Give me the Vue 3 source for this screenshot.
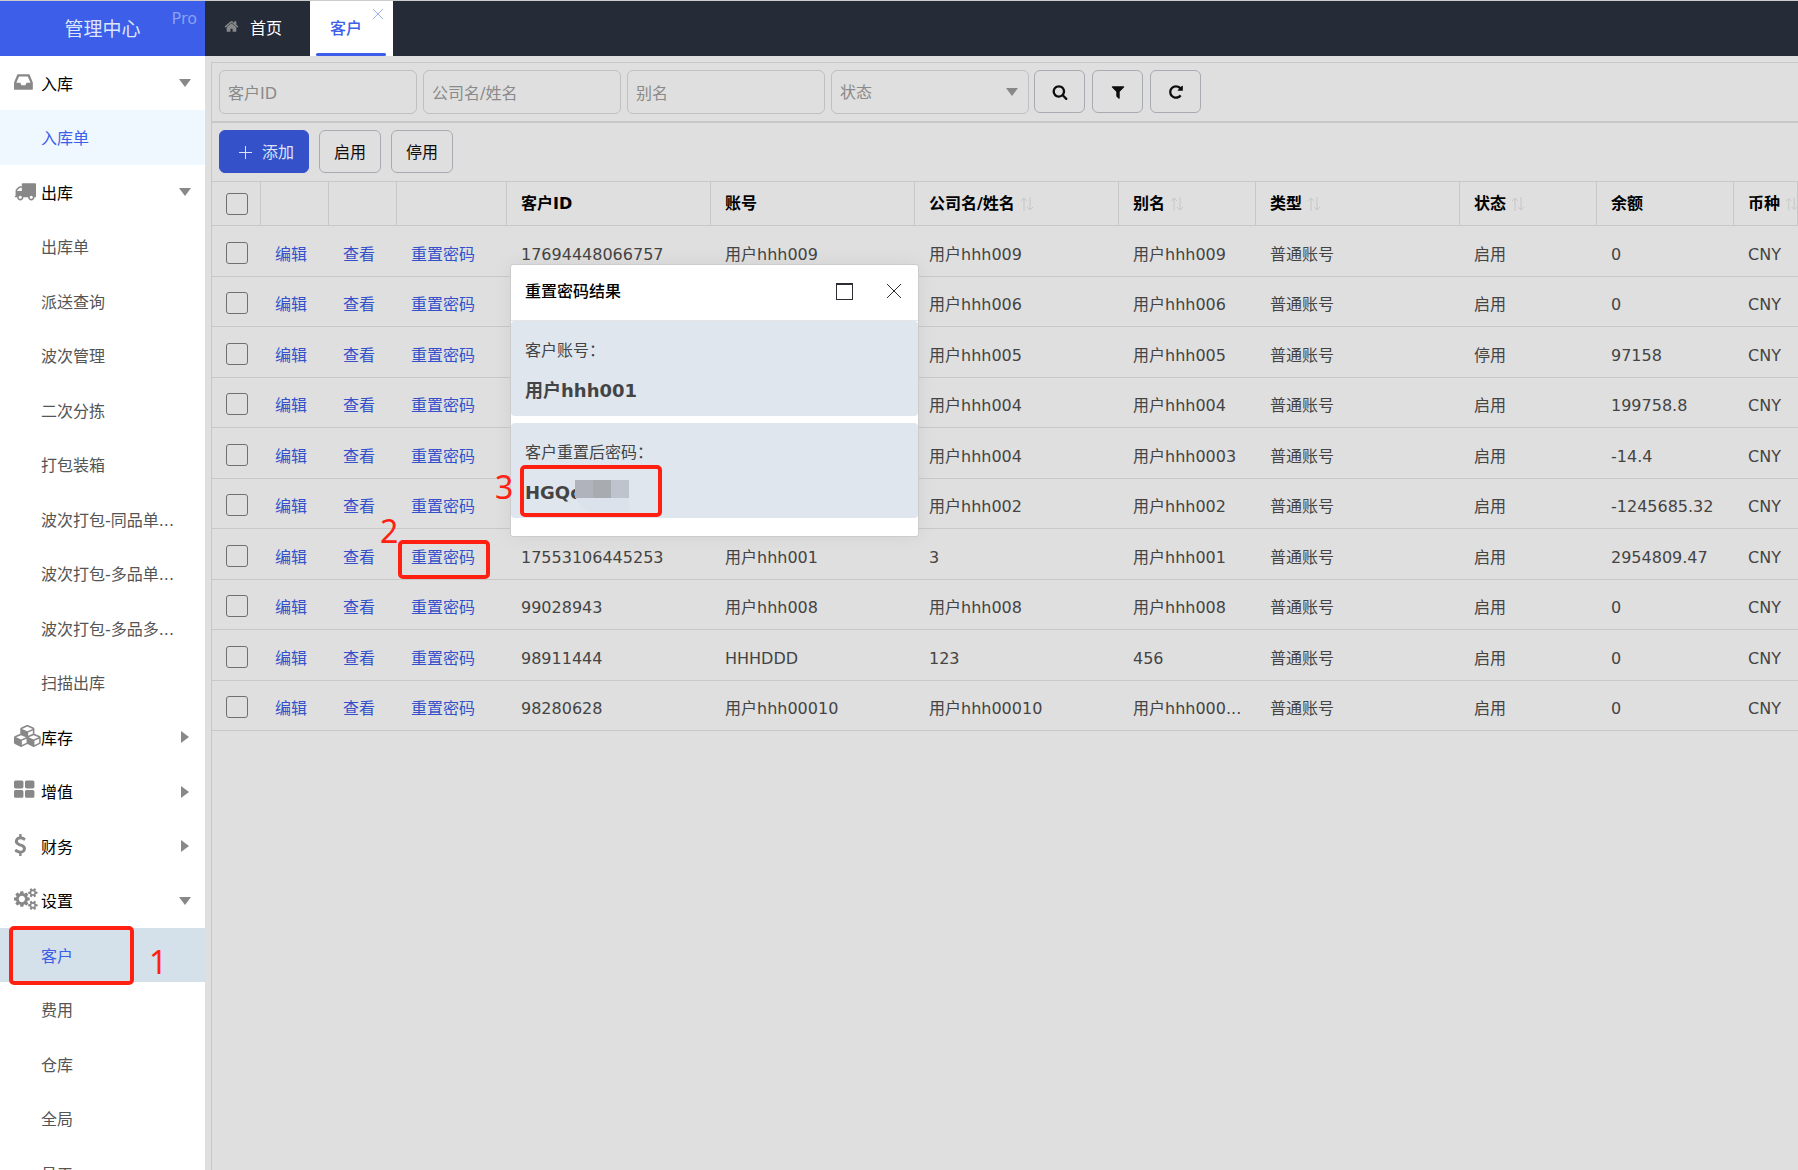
<script setup>
import { ref } from 'vue'

const icons = {
  inbox: {
    box: '128 0 1536 1792',
    d: 'M1151 960h316q-1-3-2.5-8.5t-2.5-7.5l-212-496h-708l-212 496q-1 3-2.5 8.5t-2.5 7.5h316l95 192h320zm513 30v482q0 26-19 45t-45 19h-1408q-26 0-45-19t-19-45v-482q0-62 25-123l238-552q10-25 36.5-42t52.5-17h832q26 0 52.5 17t36.5 42l238 552q25 61 25 123z'
  },
  truck: {
    box: '0 0 1792 1792',
    d: 'M640 1408q0-52-38-90t-90-38-90 38-38 90 38 90 90 38 90-38 38-90zm-384-512h384v-256h-158q-13 0-22 9l-195 195q-9 9-9 22v30zm1280 512q0-52-38-90t-90-38-90 38-38 90 38 90 90 38 90-38 38-90zm256-1088v1024q0 15-4 26.5t-13.5 18.5-16.5 11.5-23.5 6-22.5 2-25.5 0-22.5-.5q0 106-75 181t-181 75-181-75-75-181h-384q0 106-75 181t-181 75-181-75-75-181h-64q-3 0-22.5.5t-25.5 0-22.5-2-23.5-6-16.5-11.5-13.5-18.5-4-26.5q0-26 19-45t45-19v-320q0-8-.5-35t0-38 2.5-34.5 6.5-37 14-30.5 22.5-30l198-198q19-19 50.5-32t58.5-13h160v-192q0-26 19-45t45-19h1024q26 0 45 19t19 45z'
  },
  cubes: {
    box: '0 0 2304 1792',
    d: 'M640 1632l384-192v-314l-384 164v342zm-64-454l404-173-404-173-404 173zm1088 454l384-192v-314l-384 164v342zm-64-454l404-173-404-173-404 173zm-448-293l384-165v-266l-384 164v267zm-64-379l441-189-441-189-441 189zm1088 518v416q0 36-19 67t-52 47l-448 224q-25 14-57 14t-57-14l-448-224q-4-2-7-4-2 2-7 4l-448 224q-25 14-57 14t-57-14l-448-224q-33-16-52-47t-19-67v-416q0-38 21.5-70t56.5-48l434-186v-400q0-38 21.5-70t56.5-48l448-192q23-10 50-10t50 10l448 192q35 16 56.5 48t21.5 70v400l434 186q36 16 57 48t21 70z'
  },
  grid: {
    box: '64 0 1664 1792',
    d: 'M832 1024v384q0 52-38 90t-90 38h-512q-52 0-90-38t-38-90v-384q0-52 38-90t90-38h512q52 0 90 38t38 90zm0-768v384q0 52-38 90t-90 38h-512q-52 0-90-38t-38-90v-384q0-52 38-90t90-38h512q52 0 90 38t38 90zm896 768v384q0 52-38 90t-90 38h-512q-52 0-90-38t-38-90v-384q0-52 38-90t90-38h512q52 0 90 38t38 90zm0-768v384q0 52-38 90t-90 38h-512q-52 0-90-38t-38-90v-384q0-52 38-90t90-38h512q52 0 90 38t38 90z'
  },
  dollar: {
    box: '384 0 1024 1792',
    d: 'M1362 1185q0 153-99.5 263.5t-258.5 136.5v175q0 14-9 23t-23 9h-135q-13 0-22.5-9.5t-9.5-22.5v-175q-66-9-127.5-31t-101.5-44.5-74-48-46.5-37.5-17.5-18q-17-21-2-41l103-135q7-10 23-12 15-2 24 9l2 2q113 99 243 125 37 8 74 8 81 0 142.5-43t61.5-122q0-28-15-53t-33.5-42-58.5-37.5-66-32-80-32.5q-39-16-61.5-25t-61.5-26.5-62.5-31-56.5-35.5-53.5-42.5-43.5-49-35.5-58-21-66.5-8.5-78q0-138 98-242t255-134v-180q0-13 9.5-22.5t22.5-9.5h135q14 0 23 9t9 23v176q57 6 110.5 23t87 33.5 63.5 37.5 39 29 15 14q17 18 5 38l-81 146q-8 15-23 16-14 3-27-7-3-3-14.5-12t-39-26.5-58.5-32-74.5-26-85.5-11.5q-95 0-155 43t-60 111q0 26 8.5 48t29.5 41.5 39.5 33 56 31 60.5 27 70 27.5q53 20 81 31.5t76 35 75.5 42.5 62 50 53 63.5 31.5 76.5 13 94z'
  },
  cogs: {
    box: '0 0 1920 1792',
    d: 'M896 896q0-106-75-181t-181-75-181 75-75 181 75 181 181 75 181-75 75-181zm768 512q0-52-38-90t-90-38-90 38-38 90q0 53 37.5 90.5t90.5 37.5 90.5-37.5 37.5-90.5zm0-1024q0-52-38-90t-90-38-90 38-38 90q0 53 37.5 90.5t90.5 37.5 90.5-37.5 37.5-90.5zm-384 421v185q0 10-7 19.5t-16 10.5l-155 24q-11 35-32 76 34 48 90 115 7 11 7 20 0 12-7 19-23 30-82.5 89.5t-78.5 59.5q-11 0-21-7l-115-90q-37 19-77 31-11 108-23 155-7 24-30 24h-186q-11 0-20-7.5t-10-17.5l-23-153q-34-10-75-31l-118 89q-7 7-20 7-11 0-21-8-144-133-144-160 0-9 7-19 10-14 41-53t47-61q-23-44-35-82l-152-24q-10-1-17-9.5t-7-19.5v-185q0-10 7-19.5t16-10.5l155-24q11-35 32-76-34-48-90-115-7-11-7-20 0-12 7-20 22-30 82-89t79-59q11 0 21 7l115 90q34-18 77-32 11-108 23-154 7-24 30-24h186q11 0 20 7.5t10 17.5l23 153q34 10 75 31l118-89q8-7 20-7 11 0 21 8 144 133 144 160 0 8-7 19-12 16-42 54t-45 60q23 48 34 82l152 23q10 2 17 10.5t7 19.5zm640 533v140q0 16-149 31-12 27-30 52 51 113 51 138 0 4-4 7-122 71-124 71-8 0-46-47t-52-68q-20 2-30 2t-30-2q-14 21-52 68t-46 47q-2 0-124-71-4-3-4-7 0-25 51-138-18-25-30-52-149-15-149-31v-140q0-16 149-31 13-29 30-52-51-113-51-138 0-4 4-7 4-2 35-20t59-34 30-16q8 0 46 46.5t52 67.5q20-2 30-2t30 2q51-71 92-112l6-2q4 0 124 70 4 3 4 7 0 25-51 138 17 23 30 52 149 15 149 31zm0-1024v140q0 16-149 31-12 27-30 52 51 113 51 138 0 4-4 7-122 71-124 71-8 0-46-47t-52-68q-20 2-30 2t-30-2q-14 21-52 68t-46 47q-2 0-124-71-4-3-4-7 0-25 51-138-18-25-30-52-149-15-149-31v-140q0-16 149-31 13-29 30-52-51-113-51-138 0-4 4-7 4-2 35-20t59-34 30-16q8 0 46 46.5t52 67.5q20-2 30-2t30 2q51-71 92-112l6-2q4 0 124 70 4 3 4 7 0 25-51 138 17 23 30 52 149 15 149 31z'
  }
}

const menu = [
  { title: '入库', icon: 'inbox', open: true },
  { label: '入库单', state: 'current' },
  { title: '出库', icon: 'truck', open: true },
  { label: '出库单' },
  { label: '派送查询' },
  { label: '波次管理' },
  { label: '二次分拣' },
  { label: '打包装箱' },
  { label: '波次打包-同品单...' },
  { label: '波次打包-多品单...' },
  { label: '波次打包-多品多...' },
  { label: '扫描出库' },
  { title: '库存', icon: 'cubes' },
  { title: '增值', icon: 'grid' },
  { title: '财务', icon: 'dollar' },
  { title: '设置', icon: 'cogs', open: true },
  { label: '客户', state: 'selected' },
  { label: '费用' },
  { label: '仓库' },
  { label: '全局' },
  { label: '员工' }
]

const columns = [
  { name: '客户ID', cls: 'wide' },
  { name: '账号', cls: 'wide' },
  { name: '公司名/姓名', cls: 'wide', sort: true },
  { name: '别名', cls: 'mid', sort: true },
  { name: '类型', cls: 'wide', sort: true },
  { name: '状态', cls: 'mid', sort: true },
  { name: '余额', cls: 'mid' },
  { name: '币种', cls: 'rest', sort: true }
]

const rows = [
  ['17694448066757', '用户hhh009', '用户hhh009', '用户hhh009', '普通账号', '启用', '0', 'CNY'],
  ['', '', '用户hhh006', '用户hhh006', '普通账号', '启用', '0', 'CNY'],
  ['', '', '用户hhh005', '用户hhh005', '普通账号', '停用', '97158', 'CNY'],
  ['', '', '用户hhh004', '用户hhh004', '普通账号', '启用', '199758.8', 'CNY'],
  ['', '', '用户hhh004', '用户hhh0003', '普通账号', '启用', '-14.4', 'CNY'],
  ['', '', '用户hhh002', '用户hhh002', '普通账号', '启用', '-1245685.32', 'CNY'],
  ['17553106445253', '用户hhh001', '3', '用户hhh001', '普通账号', '启用', '2954809.47', 'CNY'],
  ['99028943', '用户hhh008', '用户hhh008', '用户hhh008', '普通账号', '启用', '0', 'CNY'],
  ['98911444', 'HHHDDD', '123', '456', '普通账号', '启用', '0', 'CNY'],
  ['98280628', '用户hhh00010', '用户hhh00010', '用户hhh000...', '普通账号', '启用', '0', 'CNY']
]

const status = ref('')
</script>

<template>
  <div class="page">
    <aside class="sidebar">
      <div class="brand">管理中心<span class="edition">Pro</span></div>
      <nav>
        <ul class="menu">
          <li v-for="(m, i) in menu" :key="i" :class="m.state">
            <button v-if="m.title" type="button" class="group">
              <span class="slot">
                <svg :viewBox="icons[m.icon].box" aria-hidden="true"><path :d="icons[m.icon].d" /></svg>
              </span>
              {{ m.title }}
              <span class="caret" :class="{ open: m.open }"></span>
            </button>
            <a v-else href="#">{{ m.label }}</a>
          </li>
        </ul>
      </nav>
    </aside>

    <div class="main">
      <header class="tabs">
        <a class="tab" href="#">
          <svg class="home" viewBox="0 0 1792 1792" aria-hidden="true"><path d="M1472 992v480q0 26-19 45t-45 19h-384v-384h-256v384h-384q-26 0-45-19t-19-45v-480q0-1 .5-3t.5-3l575-474 575 474q1 2 1 6zm223-69l-62 74q-8 9-21 11h-3q-13 0-21-7l-692-577-692 577q-12 8-24 7-13-2-21-11l-62-74q-8-10-7-23.5t11-21.5l719-599q32-26 76-26t76 26l244 204v-195q0-14 9-23t23-9h192q14 0 23 9t9 23v408l219 182q10 8 11 21.5t-7 23.5z" /></svg>
          首页
        </a>
        <div class="tab active">
          <a href="#">客户</a>
          <button type="button" class="tab-close" aria-label="关闭标签">
            <svg viewBox="0 0 12 12" aria-hidden="true"><path d="M1 1l10 10M11 1L1 11" /></svg>
          </button>
        </div>
      </header>

      <main class="content">
        <section class="panel">
          <form class="filters" @submit.prevent>
            <div class="fields">
              <input type="text" placeholder="客户ID" aria-label="客户ID" />
              <input type="text" placeholder="公司名/姓名" aria-label="公司名/姓名" />
              <input type="text" placeholder="别名" aria-label="别名" />
              <span class="select">
                <select v-model="status" aria-label="状态">
                  <option value="">状态</option>
                  <option>启用</option>
                  <option>停用</option>
                </select>
                <span class="caret open"></span>
              </span>
            </div>
            <div class="actions">
              <button type="submit" class="btn icon" aria-label="搜索">
                <svg viewBox="0 0 1792 1792" aria-hidden="true"><path d="M1216 832q0-185-131.5-316.5t-316.5-131.5-316.5 131.5-131.5 316.5 131.5 316.5 316.5 131.5 316.5-131.5 131.5-316.5zm512 832q0 52-38 90t-90 38q-54 0-90-38l-343-342q-179 124-399 124-143 0-273.5-55.5t-225-150-150-225-55.5-273.5 55.5-273.5 150-225 225-150 273.5-55.5 273.5 55.5 225 150 150 225 55.5 273.5q0 220-124 399l343 343q37 37 37 90z" /></svg>
              </button>
              <button type="button" class="btn icon" aria-label="筛选">
                <svg viewBox="0 0 1792 1792" aria-hidden="true"><path d="M1595 295q17 41-14 70l-493 493v742q0 42-39 59-13 5-25 5-27 0-45-19l-256-256q-19-19-19-45v-486l-493-493q-31-29-14-70 17-39 59-39h1280q42 0 59 39z" /></svg>
              </button>
              <button type="button" class="btn icon" aria-label="刷新">
                <svg viewBox="0 0 1792 1792" aria-hidden="true"><path d="M1664 256v448q0 26-19 45t-45 19h-448q-42 0-59-40-17-39 14-69l138-138q-148-137-349-137-104 0-198.5 40.5t-163.5 109.5-109.5 163.5-40.5 198.5 40.5 198.5 109.5 163.5 163.5 109.5 198.5 40.5q119 0 225-52t179-147q7-10 23-12 15 0 25 9l137 138q9 8 9.5 20.5t-7.5 22.5q-109 132-264 204.5t-327 72.5q-156 0-298-61t-245-164-164-245-61-298 61-298 164-245 245-164 298-61q147 0 284.5 55.5t244.5 156.5l130-129q29-31 70-14 39 17 39 59z" /></svg>
              </button>
            </div>
          </form>

          <div class="toolbar">
            <button type="button" class="btn primary">
              <svg viewBox="0 0 13 13" aria-hidden="true"><path d="M6.5 0v13M0 6.5h13" /></svg>
              添加
            </button>
            <button type="button" class="btn">启用</button>
            <button type="button" class="btn">停用</button>
          </div>

          <table>
            <colgroup>
              <col class="check" /><col class="op" /><col class="op" /><col class="reset" />
              <col v-for="c in columns" :key="c.name" :class="c.cls" />
            </colgroup>
            <thead>
              <tr>
                <th><input type="checkbox" aria-label="全选" /></th>
                <th></th>
                <th></th>
                <th></th>
                <th v-for="c in columns" :key="c.name" scope="col">
                  <span class="head">
                    {{ c.name }}
                    <svg v-if="c.sort" viewBox="0 0 12 14" aria-hidden="true"><path d="M3 14V2M0 4l3-3 3 3M9 0v12M6 10l3 3 3-3" /></svg>
                  </span>
                </th>
              </tr>
            </thead>
            <tbody>
              <tr v-for="(r, n) in rows" :key="n">
                <td><input type="checkbox" :aria-label="'选择 ' + r[3]" /></td>
                <td><a href="#">编辑</a></td>
                <td><a href="#">查看</a></td>
                <td><a href="#">重置密码</a></td>
                <td v-for="(v, i) in r" :key="i">{{ v }}</td>
              </tr>
            </tbody>
          </table>
        </section>
      </main>
    </div>

    <div class="dialog" role="dialog" aria-labelledby="dialog-title">
      <div class="dialog-head">
        <h2 id="dialog-title">重置密码结果</h2>
        <button type="button" aria-label="最大化"><span class="maximize"></span></button>
        <button type="button" aria-label="关闭">
          <svg viewBox="0 0 14 14" aria-hidden="true"><path d="M0 0l14 14M14 0L0 14" /></svg>
        </button>
      </div>
      <div class="result">
        <p>客户账号：</p>
        <strong>用户hhh001</strong>
      </div>
      <div class="result">
        <p>客户重置后密码：</p>
        <strong>HGQc<span class="mask"><i></i><i></i><i></i></span></strong>
      </div>
    </div>

    <div class="mark mark-1"></div>
    <div class="mark mark-2"></div>
    <div class="mark mark-3"></div>
    <span class="step step-1">1</span>
    <span class="step step-2">2</span>
    <span class="step step-3">3</span>
  </div>
</template>

<style>
body {
  background: #dfdfdf;
}
</style>

<style scoped>
* {
  box-sizing: border-box;
}

.page {
  position: relative;
  display: flex;
  height: 100vh;
  overflow: hidden;
  border-top: 1px solid #ccc;
  font: 16px/24px "DejaVu Sans", "Noto Sans CJK SC", sans-serif;
  color: #444;
  background: #dfdfdf;
}

a {
  color: inherit;
  text-decoration: none;
}

button,
input,
select {
  margin: 0;
  font: inherit;
  color: inherit;
}

svg {
  display: block;
  fill: currentColor;
}

/* Sidebar */
.sidebar {
  flex: 0 0 205px;
  overflow: hidden;
  background: #fff;
}

.brand {
  position: relative;
  height: 55px;
  padding-top: 1px;
  font-size: 19px;
  line-height: 55px;
  text-align: center;
  color: #dfe5fc;
  background: #3c5ee8;
}

.edition {
  position: absolute;
  top: 6px;
  right: 8px;
  font-size: 16px;
  line-height: 24px;
  color: #8b9ff2;
}

.menu {
  margin: 0;
  padding: 0;
  list-style: none;
}

.menu li {
  height: 54px;
  color: #555;
}

.menu li:nth-child(even) {
  height: 55px;
}

.menu li.current {
  color: #3c5ee8;
  background: #eff7ff;
}

.menu li.selected {
  color: #3c5ee8;
  background: #d5e1ea;
}

.menu a,
.group {
  display: flex;
  align-items: center;
  width: 100%;
  height: 100%;
  padding: 3px 14px 0 41px;
  white-space: nowrap;
}

.group {
  border: 0;
  padding-left: 14px;
  color: #000;
  background: none;
}

.slot {
  width: 27px;
  padding-bottom: 6px;
  color: #888;
}

.slot svg {
  height: 22px;
  overflow: visible;
}

.caret {
  margin-right: 2px;
  margin-bottom: 3px;
  margin-left: auto;
  border: solid transparent;
  border-width: 6px 0 6px 8px;
  border-left-color: #888;
}

.caret.open {
  margin-right: 0;
  border-width: 8px 6px 0;
  border-color: #888 transparent transparent;
}

/* Tabs */
.main {
  display: flex;
  flex: 1;
  flex-direction: column;
  min-width: 0;
}

.tabs {
  display: flex;
  height: 55px;
  background: #252b37;
}

.tab {
  position: relative;
  display: flex;
  align-items: center;
  gap: 11px;
  padding: 0 28px 0 19px;
  color: #fff;
}

.home {
  width: 15px;
  height: 15px;
  margin-bottom: 4px;
  color: #888;
}

.tab.active {
  padding: 0 31px 0 20px;
  font-weight: 500;
  color: #3c5ee8;
  background: #fff;
}

.tab.active::after {
  content: "";
  position: absolute;
  right: 7px;
  bottom: 0;
  left: 6px;
  height: 3px;
  border-radius: 2px;
  background: #3c5ee8;
}

.tab-close {
  position: absolute;
  top: 7px;
  right: 9px;
  padding: 0;
  border: 0;
  color: #9fb0f3;
  background: none;
}

.tab-close svg {
  width: 12px;
  height: 12px;
  stroke: currentColor;
}

/* Content */
.content {
  display: flex;
  flex: 1;
  padding: 6px 0 0 6px;
}

.panel {
  flex: 1;
  min-width: 0;
  overflow: hidden;
  border: solid #c8c8c8;
  border-width: 1px 0 0 1px;
}

.filters {
  display: flex;
  gap: 5px;
  padding: 7px;
  border-bottom: 2px solid #c8c8c8;
}

.fields,
.actions {
  display: flex;
  gap: 7px;
}

.fields {
  gap: 6px;
}

.fields input,
.select select {
  width: 198px;
  height: 44px;
  padding: 2px 8px 0;
  border: 1px solid #c0c0c0;
  border-radius: 6px;
  background: transparent;
  outline: 0;
}

.fields input::placeholder {
  color: #8a8a8a;
  opacity: 1;
}

.select {
  position: relative;
}

.select select {
  appearance: none;
  color: #8a8a8a;
}

.select .caret {
  position: absolute;
  top: 18px;
  right: 11px;
  pointer-events: none;
}

.btn {
  display: flex;
  align-items: center;
  justify-content: center;
  gap: 10px;
  height: 43px;
  padding: 2px 14px 0;
  border: 1px solid #a8abb1;
  border-radius: 6px;
  color: #0d0d0f;
  background: transparent;
}

.btn.icon {
  width: 51px;
  padding: 0;
}

.btn.icon svg {
  width: 16px;
  height: 16px;
}

.btn.primary {
  padding: 2px 14px 0 19px;
  border-color: #3451ca;
  color: #dfe3f5;
  background: #3451ca;
}

.btn.primary svg {
  width: 13px;
  height: 13px;
  stroke: currentColor;
}

.toolbar {
  display: flex;
  gap: 10px;
  padding: 7px 7px 8px;
  border-bottom: 1px solid #c8c8c8;
}

table {
  width: 100%;
  table-layout: fixed;
  border-collapse: separate;
  border-spacing: 0;
}

.check {
  width: 49px;
}

.op {
  width: 68px;
}

.reset {
  width: 110px;
}

.wide {
  width: 204px;
}

.mid {
  width: 137px;
}

th,
td {
  padding: 0 0 0 14px;
  border-bottom: 1px solid #c8c8c8;
  text-align: left;
  white-space: nowrap;
}

th {
  height: 44px;
  border-right: 1px solid #c8c8c8;
  color: #000;
}

td {
  height: 50px;
  padding-top: 7px;
}

tbody tr:nth-child(odd) td {
  height: 51px;
}

td a {
  color: #3451ca;
}

.head {
  display: flex;
  align-items: center;
  gap: 6px;
}

.head svg {
  width: 12px;
  height: 14px;
  fill: none;
  stroke: #c6c6c6;
}

table input {
  display: block;
  width: 22px;
  height: 22px;
  appearance: none;
  border: 1px solid #707070;
  border-radius: 3px;
}

td input {
  margin-bottom: 4px;
}

/* Result dialog */
.dialog {
  position: absolute;
  top: 263px;
  left: 510px;
  width: 409px;
  padding-bottom: 18px;
  border: 1px solid #ccc;
  border-radius: 3px;
  background: #fff;
  box-shadow: 0 0 20px rgba(0, 0, 0, 0.06);
}

.dialog-head {
  display: flex;
  align-items: center;
  gap: 34px;
  height: 56px;
  padding: 0 17px 3px 14px;
  border-bottom: 1px solid #e6e6e6;
}

.dialog-head h2 {
  flex: 1;
  margin: 0;
  padding-top: 2px;
  font-size: 16px;
  font-weight: 500;
  color: #000;
}

.dialog-head button {
  padding: 0;
  border: 0;
  color: #2d2d33;
  background: none;
}

.dialog-head svg {
  width: 14px;
  height: 14px;
  stroke: currentColor;
}

.maximize {
  display: block;
  width: 17px;
  height: 17px;
  border: 1px solid;
  border-top-width: 2px;
}

.result {
  height: 95px;
  padding: 18px 14px;
  border-radius: 4px;
  background: #dfe6ee;
}

.result + .result {
  margin-top: 7px;
}

.result p {
  margin: 0 0 16px;
}

.result strong {
  display: flex;
  font-size: 18px;
}

.mask {
  display: flex;
  height: 32px;
  margin-top: -1px;
  margin-left: -6px;
  background: #dbe2eb;
  border-bottom-left-radius: 20px;
}

.mask i {
  width: 18px;
  height: 18px;
  background: #b0b3bc;
}

.mask i:nth-child(2) {
  background: #a8abaf;
}

.mask i:nth-child(3) {
  background: #bfc3cd;
}

/* Guide marks */
.mark {
  position: absolute;
  border: 4px solid #ff2012;
  border-radius: 5px;
  pointer-events: none;
}

.mark-1 {
  top: 925px;
  left: 9px;
  width: 125px;
  height: 59px;
}

.mark-2 {
  top: 539px;
  left: 398px;
  width: 92px;
  height: 39px;
}

.mark-3 {
  top: 464px;
  left: 520px;
  width: 142px;
  height: 52px;
}

.step {
  position: absolute;
  font: 32px/40px "Noto Sans", "Noto Sans CJK SC", sans-serif;
  color: #ff2012;
}

.step-1 {
  top: 941px;
  left: 149px;
}

.step-2 {
  top: 510px;
  left: 380px;
}

.step-3 {
  top: 466px;
  left: 495px;
}
</style>
